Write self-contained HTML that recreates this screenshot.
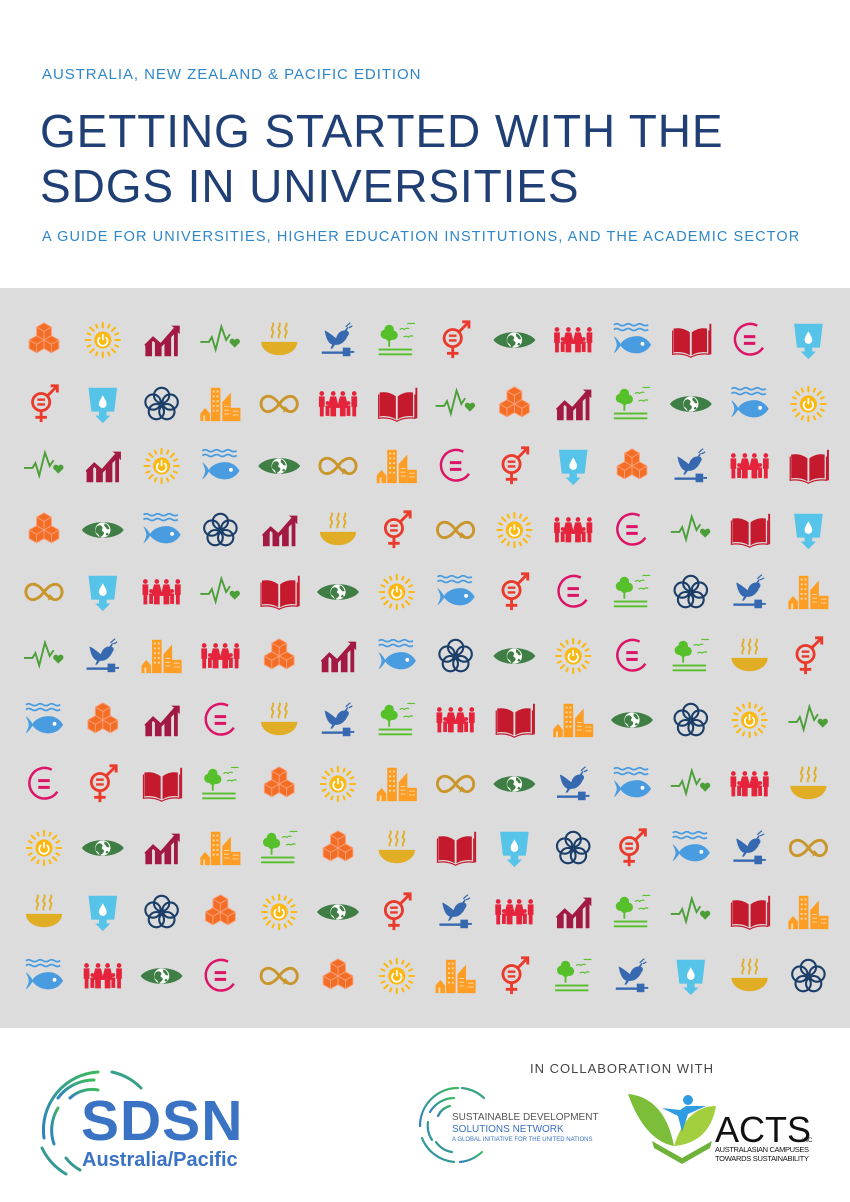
<!DOCTYPE html>
<html><head><meta charset="utf-8">
<style>
*{margin:0;padding:0}
body{width:850px;height:1202px;position:relative;background:#fff;font-family:"Liberation Sans",sans-serif;overflow:hidden}
.t{position:absolute;white-space:nowrap}
#ed{left:42px;top:66px;font-size:15px;color:#2f86c8;letter-spacing:0.95px}
#ti{left:40px;top:104px;font-size:46px;line-height:55px;color:#1f3f75;letter-spacing:0.9px}
#sub{left:42px;top:229px;font-size:14.5px;color:#2f86c8;letter-spacing:1.1px}
#grid{position:absolute;left:0;top:288px;width:850px;height:740px;background:#dcdcdc}
#col{left:530px;top:1061px;font-size:13px;color:#444;letter-spacing:1px}
</style></head><body>
<div class="t" id="ed">AUSTRALIA, NEW ZEALAND &amp; PACIFIC EDITION</div>
<div class="t" id="ti">GETTING STARTED WITH THE<br>SDGS IN UNIVERSITIES</div>
<div class="t" id="sub">A GUIDE FOR UNIVERSITIES, HIGHER EDUCATION INSTITUTIONS, AND THE ACADEMIC SECTOR</div>
<svg id="grid" width="850" height="740" viewBox="0 288 850 740">
<defs>
<symbol id="A" viewBox="0 0 44 44"><g fill="#f36d25" stroke="#f9a07a" stroke-width="1">
<polygon points="22,4 29.8,8.5 29.8,17.5 22,22 14.2,17.5 14.2,8.5"/><polygon points="14.2,17.5 22,22 22,31 14.2,35.5 6.4,31 6.4,22"/><polygon points="29.8,17.5 37.6,22 37.6,31 29.8,35.5 22,31 22,22"/>
<path d="M22,13 L14.2,8.5 M22,13 L29.8,8.5 M22,13 V22 M14.2,26.5 L6.4,22 M14.2,26.5 L22,22 M14.2,26.5 V35.5 M29.8,26.5 L22,22 M29.8,26.5 L37.6,22 M29.8,26.5 V35.5" fill="none"/></g></symbol>
<symbol id="B" viewBox="0 0 44 44"><g stroke="#fcb813" stroke-width="2.2" stroke-linecap="round"><path d="M22,4v5M22,35v5M4,22h5M35,22h5M9,9l3.5,3.5M31.5,31.5L35,35M35,9l-3.5,3.5M12.5,31.5L9,35M15,6l1.3,3M27.7,35l1.3,3M6,29l3-1.3M35,16.3l3-1.3M29,6l-1.3,3M16.3,35L15,38M6,15l3,1.3M35,27.7l3,1.3"/></g><circle cx="22" cy="22" r="9" fill="#fcb813"/><path d="M18.5,19.5a5,5 0 1 0 7,0M22,16.5v5" stroke="#fff" stroke-width="1.8" fill="none" stroke-linecap="round"/></symbol>
<symbol id="C" viewBox="0 0 44 44"><g fill="#a21942"><path d="M5,39V29l7-6v16zM15,39V22l7,6v11zM25,39V23l7-6v22zM35,39V12l4-4v31z"/><path d="M4,27L13,18l8,7L35,9l-3-2h9v9l-3-3L21,30l-8-7-7,7z"/></g></symbol>
<symbol id="D" viewBox="0 0 44 44"><path d="M1,24h9l3-5 4,13 6-24 5,14 4-6" fill="none" stroke="#4c9f38" stroke-width="2"/><path d="M37,30l-5-5a2.7,2.7 0 0 1 5-3a2.7,2.7 0 0 1 5,3z" fill="#4c9f38"/></symbol>
<symbol id="E" viewBox="0 0 44 44"><path d="M3,24h38a19,14 0 0 1 -38,0z" fill="#e0ad25"/><path d="M15,20c-3-3 3-5 0-8s3-5 0-8M22,20c-3-3 3-5 0-8s3-5 0-8M29,20c-3-3 3-5 0-8s3-5 0-8" fill="none" stroke="#e0ad25" stroke-width="2"/></symbol>
<symbol id="F" viewBox="0 0 44 44"><path d="M8,12c5,2 9,6 12,8c1-4 4-8 9-8l3,-4c1,2 0,3 -1,4c3,1 3,4 1,6c-2,5 -7,10 -13,9l-3,4h-2l2-4c-5,-2 -7,-9 -8,-15z" fill="#3669b0"/><path d="M30,8c2-1 3-3 5-4M33,9c2,0 3-1 4-2" stroke="#3669b0" stroke-width="1.3" fill="none"/><rect x="5" y="34" width="24" height="2.5" fill="#3669b0"/><rect x="27" y="30" width="8" height="9" fill="#3669b0"/><rect x="35" y="33.5" width="4" height="2" fill="#3669b0"/></symbol>
<symbol id="G" viewBox="0 0 44 44"><g fill="#56c02b"><circle cx="14" cy="11" r="5"/><circle cx="10" cy="16" r="5"/><circle cx="18" cy="17" r="5"/><circle cx="14" cy="19" r="4"/><rect x="13" y="20" width="2" height="9"/><rect x="3" y="31" width="35" height="2"/><rect x="3" y="36" width="35" height="2"/></g><path d="M25,11q3-2 5,0q2-2 5-1M29,19q3-2 5,0q2-2 5-1M33,5q2-1 4,0q2-1 4,0" stroke="#56c02b" stroke-width="1.2" fill="none"/></symbol>
<symbol id="H" viewBox="0 0 44 44"><circle cx="19" cy="20" r="9" fill="none" stroke="#ea3a2c" stroke-width="3"/><path d="M19,29v12M13,36h12M25,14L36,3M29,3h7v7" stroke="#ea3a2c" stroke-width="3" fill="none"/><path d="M15,17.5h8M15,22.5h8" stroke="#ea3a2c" stroke-width="2.5"/></symbol>
<symbol id="I" viewBox="0 0 44 44"><path d="M0,22C8,11 36,11 44,22C36,33 8,33 0,22z" fill="#3f7e44"/><circle cx="22" cy="22" r="8" fill="#fff"/><path d="M16,18c3-2 5-1 6,2c-2,2-1,3 1,4c1,3-2,4-4,6c-1-3-2-4-4-5c-1-2-1-4 1-7zM24,15c3,1 4,3 5,6c-2,1-3,0-4-2c-1,0-2-2-1-4zM26,25c2,0 2,1 2,2c-1,1-2,1-3,0z" fill="#3f7e44"/></symbol>
<symbol id="J" viewBox="0 0 44 44"><g fill="#e5243b"><circle cx="5" cy="11" r="2.5"/><rect x="2" y="14" width="6" height="11"/><rect x="3" y="24" width="4" height="11"/><circle cx="11" cy="21" r="2"/><rect x="9" y="23.5" width="4" height="11"/><circle cx="17" cy="11" r="2.5"/><path d="M14,14h6l3,12h-3v9h-6v-9h-3z"/><circle cx="27" cy="11" r="2.5"/><path d="M24,14h6l3,12h-3v9h-6v-9h-3z"/><circle cx="33" cy="21" r="2"/><rect x="31" y="23.5" width="4" height="11"/><circle cx="39" cy="11" r="2.5"/><rect x="36" y="14" width="6" height="11"/><rect x="37" y="24" width="4" height="11"/></g></symbol>
<symbol id="K" viewBox="0 0 44 44"><path d="M3,6q3-2 6,0t6,0t6,0t6,0t6,0t6,0M3,11q3-2 6,0t6,0t6,0t6,0t6,0t6,0" stroke="#4a9ce0" stroke-width="1.8" fill="none"/><path d="M3,18c3,2 5,5 7,8c3-5 10-8 17-8c7,0 12,4 15,9c-3,5-8,9-15,9c-7,0-13-3-17-8c-2,3-4,6-7,8c1-3 3-6 3-9c0-3-2-6-3-9z" fill="#4a9ce0"/><circle cx="33" cy="26" r="2" fill="#fff"/></symbol>
<symbol id="L" viewBox="0 0 44 44"><path d="M4,10c6-1 12,0 17,4v24c-5-3-11-4-17-3z M23,14c5-4 11-5 16-4v25c-5-1-11 0-16,3z" fill="#c5192d"/><path d="M3,12v25c6-1 13,0 19,3c6-3 13-4 19-3V12" stroke="#c5192d" stroke-width="1.3" fill="none"/><rect x="41.5" y="5" width="2" height="32" fill="#c5192d"/></symbol>
<symbol id="M" viewBox="0 0 44 44"><path d="M30,7A16,16 0 1 0 36,30" fill="none" stroke="#dd1367" stroke-width="2.6"/><path d="M16,18.5h12M16,25.5h12" stroke="#dd1367" stroke-width="3.2"/></symbol>
<symbol id="N" viewBox="0 0 44 44"><path d="M7,5h30l-3,25h-8v4h4l-8,8l-8-8h4v-4h-8z" fill="#56c3e8"/><path d="M22,13c-3,5-4,7-4,9a4,4 0 0 0 8,0c0-2-1-4-4-9z" fill="#fff"/></symbol>
<symbol id="O" viewBox="0 0 44 44"><g fill="none" stroke="#1b3e68" stroke-width="2.2"><circle cx="22" cy="13" r="8"/><circle cx="13" cy="20" r="8"/><circle cx="31" cy="20" r="8"/><circle cx="16.5" cy="30" r="8"/><circle cx="27.5" cy="30" r="8"/></g></symbol>
<symbol id="P" viewBox="0 0 44 44"><g fill="#fd9d24"><path d="M1,32l5-6 5,6v8H1z"/><rect x="12" y="5" width="10" height="35"/><path d="M24,40V20l9-10v30z"/><rect x="33" y="26" width="10" height="14"/></g><g fill="#fdd7a8"><rect x="14" y="8" width="2" height="2"/><rect x="18" y="8" width="2" height="2"/><rect x="14" y="13" width="2" height="2"/><rect x="18" y="13" width="2" height="2"/><rect x="14" y="18" width="2" height="2"/><rect x="18" y="18" width="2" height="2"/><rect x="14" y="23" width="2" height="2"/><rect x="18" y="23" width="2" height="2"/><rect x="14" y="28" width="2" height="2"/><rect x="18" y="28" width="2" height="2"/><rect x="26" y="24" width="5" height="1"/><rect x="26" y="28" width="5" height="1"/><rect x="26" y="32" width="5" height="1"/><rect x="35" y="29" width="6" height="1"/><rect x="35" y="33" width="6" height="1"/><rect x="4" y="34" width="2" height="6"/></g></symbol>
<symbol id="Q" viewBox="0 0 44 44"><path d="M22,22C18,16 13,13 9,14C5,15 3,18 3,22s3,8 7,8c5,0 9-4 12-8c3-4 7-8 12-8c4,0 7,4 7,8s-3,8-7,8c-4,0-8-3-12-8" fill="none" stroke="#c9962c" stroke-width="3"/><path d="M26,31l6-3l-4-4z" fill="#c9962c"/></symbol>
</defs>
<rect x="0" y="288" width="850" height="740" fill="#dcdcdc"/>
<g id="rows"></g>
</svg>
<script>
var rows=["ABCDEFGHIJKLMN","HNOPQJLDACGIKB","DCBKIQPMHNAFJL","AIKOCEHQBJMDLN","QNJDLIBKHMGOFP","DFPJACKOIBMGEH","KACMEFGJLPIOBD","MHLGABPQIFKDJE","BICPGAELNOHKFQ","ENOABIHFJCGDLP","KJIMQABPHGFNEO"];
var ys=[340,404,466,530,592,656,720,784,848,912,976];
var g=document.getElementById('rows'),h='';
rows.forEach(function(r,ri){for(var i=0;i<14;i++){var cx=44+58.8*i;h+='<use href="#'+r[i]+'" x="'+(cx-21)+'" y="'+(ys[ri]-21)+'" width="42" height="42"/>';}});
g.innerHTML=h;
</script>
<svg style="position:absolute;left:36px;top:1058px" width="230" height="120" viewBox="0 0 230 120">
<defs><linearGradient id="gr" x1="0" y1="1" x2="1" y2="0"><stop offset="0" stop-color="#2d7fc4"/><stop offset="1" stop-color="#3dbb5a"/></linearGradient></defs>
<g fill="none" stroke="url(#gr)" stroke-width="3" stroke-linecap="round">
<path d="M8,80A58,58 0 0 1 62,14"/><path d="M76,14A58,58 0 0 1 105,30"/><path d="M22,40A44,44 0 0 1 58,22"/><path d="M34,40A32,32 0 0 1 62,32"/><path d="M22,50A42,42 0 0 0 18,86"/><path d="M6,90A60,60 0 0 0 30,116"/><path d="M30,100A44,44 0 0 0 44,112"/></g>
<text x="45" y="82" font-family="Liberation Sans" font-weight="bold" font-size="57" fill="#3a72c4" letter-spacing="1">SDSN</text>
<text x="46" y="108" font-family="Liberation Sans" font-weight="bold" font-size="20" fill="#3a72c4">Australia/Pacific</text>
</svg>
<div class="t" id="col">IN COLLABORATION WITH</div>
<svg style="position:absolute;left:414px;top:1082px" width="200" height="85" viewBox="0 0 200 85">
<defs><linearGradient id="g2" x1="0" y1="1" x2="1" y2="0"><stop offset="0" stop-color="#2d7fc4"/><stop offset="1" stop-color="#3dbb5a"/></linearGradient></defs>
<g fill="none" stroke="url(#g2)" stroke-width="2.2" stroke-linecap="round">
<path d="M6,44A38,38 0 0 1 44,6"/><path d="M48,6A38,38 0 0 1 70,16"/><path d="M16,30A28,28 0 0 1 40,16"/><path d="M24,34A18,18 0 0 1 36,24"/><path d="M8,56A38,38 0 0 0 40,80"/><path d="M46,80A38,38 0 0 0 68,70"/><path d="M22,60A24,24 0 0 0 38,70"/><path d="M14,40A26,26 0 0 0 18,58"/></g>
<text x="38" y="38" font-family="Liberation Sans" font-size="10" fill="#555">SUSTAINABLE DEVELOPMENT</text>
<text x="38" y="50" font-family="Liberation Sans" font-size="10" fill="#3a72c4">SOLUTIONS NETWORK</text>
<text x="38" y="59" font-family="Liberation Sans" font-size="6" fill="#3a72c4">A GLOBAL INITIATIVE FOR THE UNITED NATIONS</text>
</svg>
<svg style="position:absolute;left:622px;top:1086px" width="200" height="80" viewBox="0 0 200 80">
<path d="M6,8C30,10 46,28 52,60C40,58 20,48 6,8z" fill="#7cbd3a"/><path d="M52,60C60,34 74,20 94,20C90,44 76,58 52,60z" fill="#a3cf3f"/><path d="M30,55L60,72L90,55L88,62L60,78L32,62z" fill="#6fb23a"/>
<circle cx="66" cy="14" r="5" fill="#2f9be0"/><path d="M40,22L58,24L64,20L84,20L66,28L60,46L56,30z" fill="#2f9be0"/>
<text x="93" y="56" font-family="Liberation Sans" font-size="36" fill="#111">ACTS</text>
<text x="180" y="56" font-family="Liberation Sans" font-size="6" fill="#111">INC</text>
<text x="93" y="66" font-family="Liberation Sans" font-size="7.5" fill="#111" textLength="94">AUSTRALASIAN CAMPUSES</text>
<text x="93" y="75" font-family="Liberation Sans" font-size="7.5" fill="#111" textLength="94">TOWARDS SUSTAINABILITY</text>
</svg>
</body></html>
